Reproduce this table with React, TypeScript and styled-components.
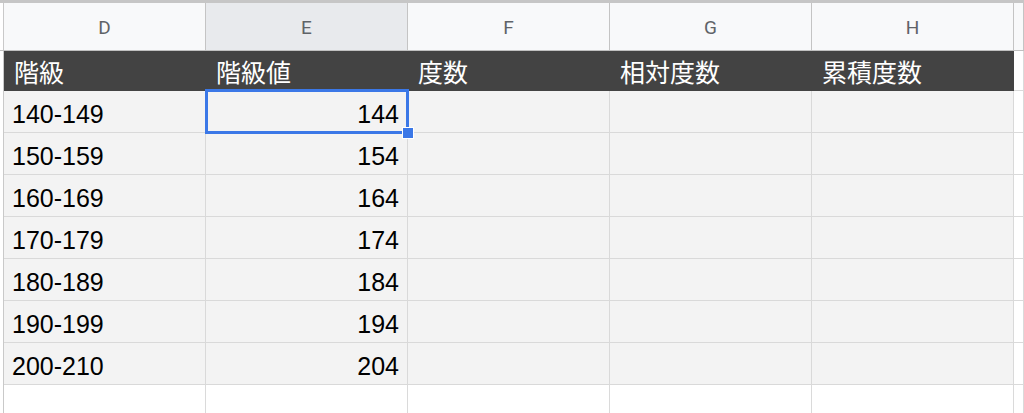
import React from 'react';
import styled, { createGlobalStyle } from 'styled-components';

const GlobalStyle = createGlobalStyle`
  html, body {
    margin: 0;
    padding: 0;
    background: #ffffff;
    overflow: hidden;
  }
`;

const columns = ['D', 'E', 'F', 'G', 'H'];
const headings = ['階級', '階級値', '度数', '相対度数', '累積度数'];
const classes = [
  ['140-149', '144'],
  ['150-159', '154'],
  ['160-169', '164'],
  ['170-179', '174'],
  ['180-189', '184'],
  ['190-199', '194'],
  ['200-210', '204'],
];

function App() {
  return (
    <Sheet>
      <GlobalStyle />
      <ColumnHeaderRow>
        <Gutter />
        {columns.map((c) => (
          <ColumnLetter key={c} $active={c === 'E'}>
            {c}
          </ColumnLetter>
        ))}
        <ColumnLetter />
      </ColumnHeaderRow>
      <TitleRow>
        <Gutter />
        {headings.map((h) => (
          <TitleCell key={h}>{h}</TitleCell>
        ))}
        <BlankCell />
      </TitleRow>
      {classes.map(([range, mid], i) => (
        <DataRow key={range}>
          <Gutter />
          <DataCell>{range}</DataCell>
          <DataCell $right $selected={i === 0}>
            {mid}
            {i === 0 && (
              <Selection>
                <FillHandle />
              </Selection>
            )}
          </DataCell>
          <DataCell />
          <DataCell />
          <DataCell />
          <BlankCell />
        </DataRow>
      ))}
      <EmptyRow>
        <Gutter />
        <BlankCell />
        <BlankCell />
        <BlankCell />
        <BlankCell />
        <BlankCell />
        <BlankCell />
      </EmptyRow>
    </Sheet>
  );
}

export default App;

const Sheet = styled.div`
  width: 1024px;
  height: 413px;
  overflow: hidden;
  border-top: 3px solid #c6c6c6;
  box-sizing: border-box;
  font-family: 'Liberation Sans', Arial, 'Noto Sans CJK JP', sans-serif;
`;

const Row = styled.div`
  display: grid;
  grid-template-columns: 4px repeat(5, 202px) 1fr;
`;

const Gutter = styled.div`
  background: #ffffff;
  border-right: 1px solid #c9c9c9;
  box-sizing: border-box;
`;

const ColumnHeaderRow = styled(Row)`
  height: 48px;
  border-bottom: 1px solid #c0c0c0;
  box-sizing: border-box;
`;

const ColumnLetter = styled.div<{ $active?: boolean }>`
  display: flex;
  align-items: center;
  justify-content: center;
  background: ${(p) => (p.$active ? '#e8eaed' : '#f8f9fa')};
  border-right: 1px solid #c4c4c4;
  box-sizing: border-box;
  font-family: Roboto, 'Liberation Sans', sans-serif;
  font-size: 19px;
  color: #5f6368;
  padding-top: 2px;
`;

const TitleRow = styled(Row)`
  height: 40px;
`;

const TitleCell = styled.div`
  display: flex;
  align-items: center;
  padding: 0 0 0 10px;
  background: #434343;
  color: #ffffff;
  font-family: 'Noto Sans CJK JP', sans-serif;
  font-size: 25px;
  line-height: 30px;
`;

const BlankCell = styled.div`
  background: #ffffff;
  border-right: 1px solid #dadada;
  border-bottom: 1px solid #dadada;
  box-sizing: border-box;
`;

const DataRow = styled(Row)`
  height: 42px;
`;

const DataCell = styled.div<{ $right?: boolean; $selected?: boolean }>`
  position: relative;
  z-index: ${(p) => (p.$selected ? 2 : 'auto')};
  display: flex;
  align-items: flex-end;
  justify-content: ${(p) => (p.$right ? 'flex-end' : 'flex-start')};
  padding: 0 8px 3px 8px;
  background: #f3f3f3;
  border-right: 1px solid #d9d9d9;
  border-bottom: 1px solid #d9d9d9;
  box-sizing: border-box;
  color: #000000;
  font-size: 25px;
  line-height: 29px;
`;

const Selection = styled.div`
  position: absolute;
  top: -2px;
  left: -1px;
  right: -2px;
  bottom: -2px;
  border: 3px solid #3b78e7;
  pointer-events: none;
`;

const FillHandle = styled.div`
  position: absolute;
  right: -8px;
  bottom: -8px;
  width: 10px;
  height: 10px;
  background: #3b78e7;
  border: 1px solid #ffffff;
`;

const EmptyRow = styled(Row)`
  height: 40px;
`;
